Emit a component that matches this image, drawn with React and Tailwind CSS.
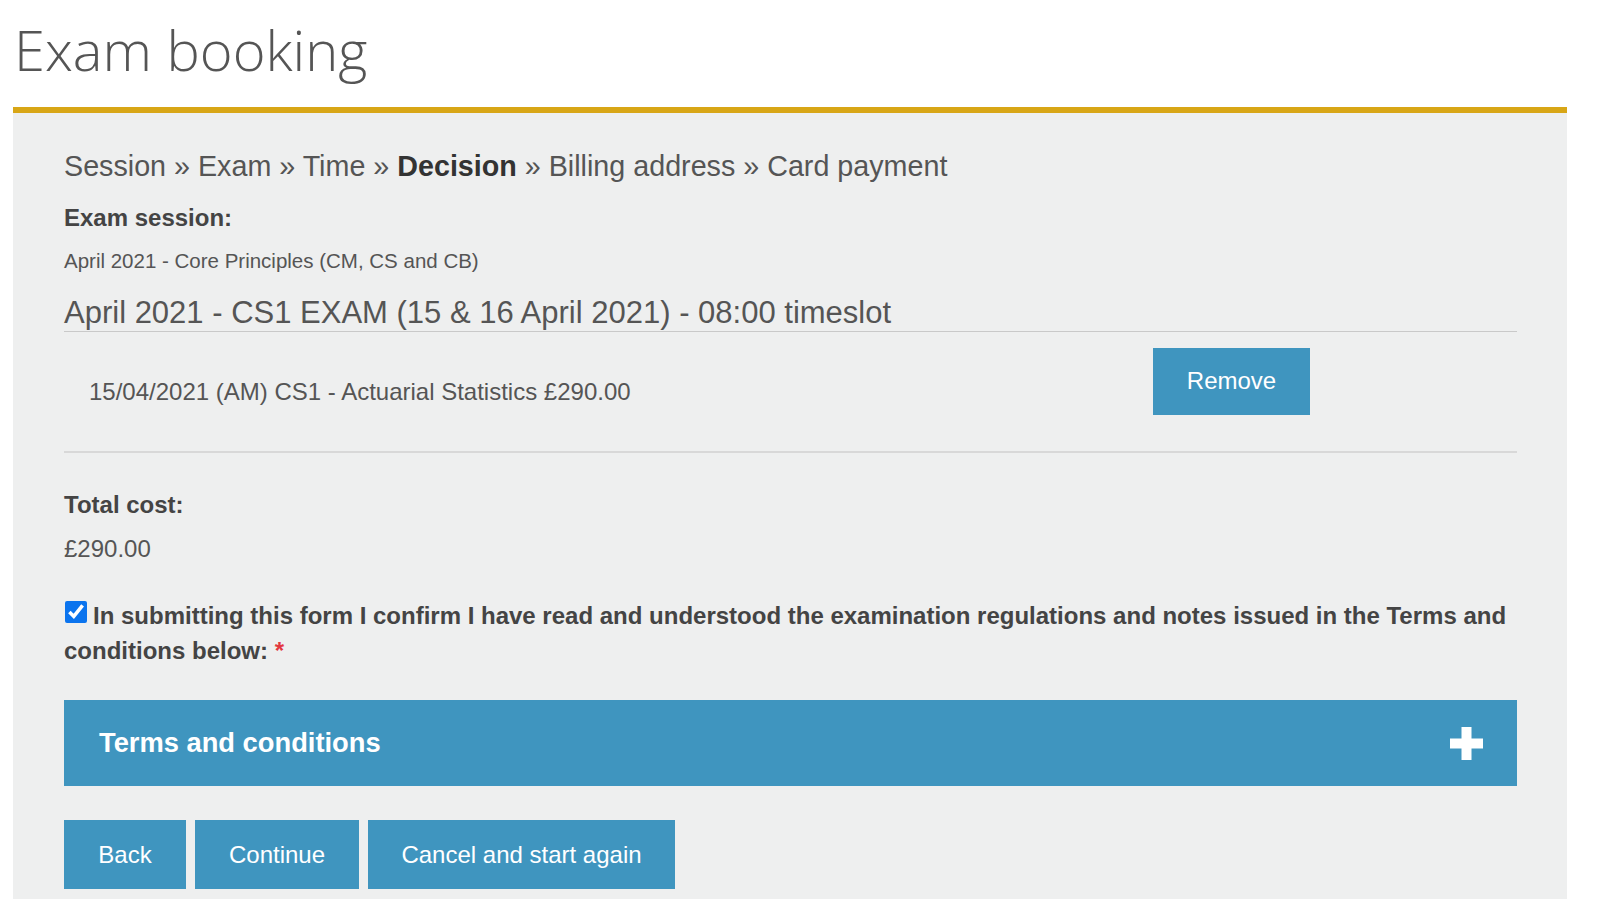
import React, { useState } from 'react'

const blue = 'bg-[#3f95bf]'

function PlusIcon() {
  return (
    <svg width="33" height="33" viewBox="0 0 33 33" aria-hidden="true">
      <rect x="0" y="11.5" width="33" height="10" fill="#ffffff" />
      <rect x="11.5" y="0" width="10" height="33" fill="#ffffff" />
    </svg>
  )
}

export default function App() {
  const [agreed, setAgreed] = useState(true)

  return (
    <div className="min-h-screen bg-white font-['Liberation_Sans',Arial,sans-serif] text-[#555]">
      {/* Page title */}
      <div className="px-[14px] pt-[16px] mb-[24px]">
        <h1 className="font-['Open_Sans',sans-serif] font-light text-[56px] leading-[1.2] text-[#555]">
          Exam booking
        </h1>
      </div>

      {/* Booking panel */}
      <div className="ml-[13px] w-[1554px] min-h-[786px] border-t-[6px] border-[#d8a616] bg-[#eeefef] pl-[51px] pr-[50px] pt-[32px] pb-[10px]">
        <div className="text-[28.7px] leading-[42px] text-[#555]">
          Session » Exam » Time » <span className="font-bold text-[#333]">Decision</span> » Billing address » Card payment
        </div>

        <div className="mt-[14px] text-[24px] leading-[34.5px] font-bold text-[#444]">Exam session:</div>
        <div className="mt-[10px] text-[20.5px] leading-[30px] text-[#555]">
          April 2021 - Core Principles (CM, CS and CB)
        </div>

        <div className="mt-[18px] border-b border-[#c9c9c9] text-[31px] leading-[37px] text-[#555]">
          April 2021 - CS1 EXAM (15 &amp; 16 April 2021) - 08:00 timeslot
        </div>

        <div className="flex items-start pt-[16px] pb-[36px] border-b-2 border-[#d8d8d8]">
          <div className="flex-1 pl-[25px] pt-[26px] text-[24px] leading-[36px] text-[#555]">
            15/04/2021 (AM) CS1 - Actuarial Statistics £290.00
          </div>
          <button className={`${blue} mr-[207px] h-[67px] w-[157px] text-[24px] text-white`}>Remove</button>
        </div>

        <div className="mt-[35px] text-[24px] leading-[34.5px] font-bold text-[#444]">Total cost:</div>
        <div className="mt-[9px] text-[24px] leading-[36px] text-[#555]">£290.00</div>

        <label className="mt-[31px] block text-[24px] leading-[35px] font-bold text-[#444]">
          <input
            type="checkbox"
            checked={agreed}
            onChange={(e) => setAgreed(e.target.checked)}
            className="m-0 ml-[1px] mr-[6px] h-[22px] w-[22px] align-[1px] accent-[#0b74ee]"
          />
          In submitting this form I confirm I have read and understood the examination regulations and notes issued in the Terms and conditions below: <span className="text-[#e2383f]">*</span>
        </label>

        {/* Terms accordion header */}
        <div className={`${blue} mt-[32px] flex h-[86px] items-center justify-between pl-[35px] pr-[34px]`}>
          <span className="text-[27.3px] font-bold text-white">Terms and conditions</span>
          <PlusIcon />
        </div>

        <div className="mt-[34px] flex gap-[9px]">
          <button className={`${blue} h-[69px] w-[122px] text-[24px] text-white`}>Back</button>
          <button className={`${blue} h-[69px] w-[164px] text-[24px] text-white`}>Continue</button>
          <button className={`${blue} h-[69px] w-[307px] text-[24px] text-white`}>Cancel and start again</button>
        </div>
      </div>
    </div>
  )
}
